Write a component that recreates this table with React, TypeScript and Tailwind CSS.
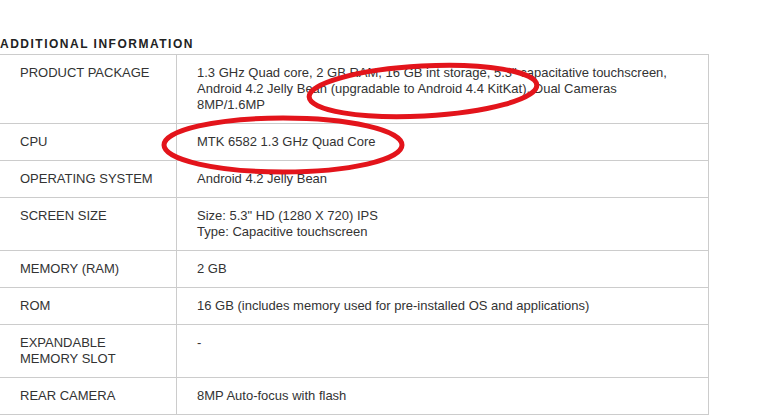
const rows: { label: string[]; value: string[] }[] = [
  {
    label: ['PRODUCT PACKAGE'],
    value: [
      '1.3 GHz Quad core, 2 GB RAM, 16 GB int storage, 5.3" capacitative touchscreen,',
      'Android 4.2 Jelly Bean (upgradable to Android 4.4 KitKat), Dual Cameras',
      '8MP/1.6MP',
    ],
  },
  { label: ['CPU'], value: ['MTK 6582 1.3 GHz Quad Core'] },
  { label: ['OPERATING SYSTEM'], value: ['Android 4.2 Jelly Bean'] },
  { label: ['SCREEN SIZE'], value: ['Size: 5.3" HD (1280 X 720) IPS', 'Type: Capacitive touchscreen'] },
  { label: ['MEMORY (RAM)'], value: ['2 GB'] },
  { label: ['ROM'], value: ['16 GB (includes memory used for pre-installed OS and applications)'] },
  { label: ['EXPANDABLE', 'MEMORY SLOT'], value: ['-'] },
  { label: ['REAR CAMERA'], value: ['8MP Auto-focus with flash'] },
];

export default function App() {
  return (
    <div className="relative w-[763px] h-[416px] overflow-hidden bg-white font-['Liberation_Sans',Arial,sans-serif]">
      <h2 className="pt-[36px] text-[12px] leading-[16px] font-bold tracking-[1.5px] text-[#222]">
        ADDITIONAL INFORMATION
      </h2>

      {/* Spec table */}
      <div className="mt-[2px] w-[709px] border-t border-r border-[#cccccc] text-[13px] leading-[16px] text-[#333]">
        {rows.map((row, i) => (
          <div key={i} className="grid grid-cols-[177px_1fr]">
            <div className="border-b border-r border-[#cccccc] pl-[20px] pr-[10px] py-[10px]">
              {row.label.map((l, j) => (
                <div key={j} className="whitespace-nowrap">{l}</div>
              ))}
            </div>
            <div className="border-b border-[#cccccc] pl-[20px] pr-[20px] py-[10px]">
              {row.value.map((v, j) => (
                <div key={j} className="whitespace-nowrap">{v}</div>
              ))}
            </div>
          </div>
        ))}
      </div>

      {/* Hand-drawn highlight marks */}
      <svg className="pointer-events-none absolute inset-0" width="763" height="416" viewBox="0 0 763 416">
        <ellipse
          cx="423"
          cy="91"
          rx="114"
          ry="25"
          transform="rotate(-3 423 91)"
          fill="none"
          stroke="#e3141b"
          strokeWidth="5"
        />
        <ellipse cx="283" cy="145" rx="119" ry="27" fill="none" stroke="#e3141b" strokeWidth="5" />
      </svg>
    </div>
  );
}
